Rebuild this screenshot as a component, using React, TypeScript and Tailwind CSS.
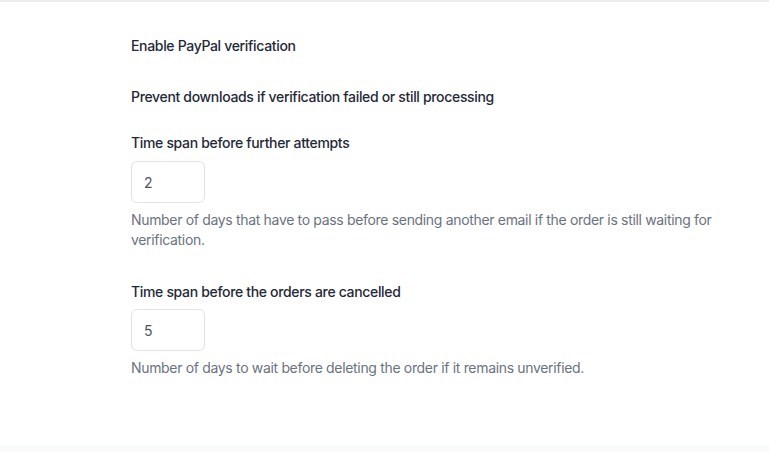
export default function App() {
  return (
    <div className="min-h-[452px] bg-[#f9fafb] tracking-[-0.33px]" style={{ fontFamily: "Inter, 'Noto Sans', sans-serif" }}>
      <div className="h-[445px] bg-white border-t-2 border-[#ececec] pl-[131px] pt-[34px]">
        <div className="text-[14px] leading-[20px] font-medium text-[#1f2937]">Enable PayPal verification</div>
        <div className="mt-[31px] text-[14px] leading-[20px] font-medium text-[#1f2937]">
          Prevent downloads if verification failed or still processing
        </div>
        <div className="mt-[26px] text-[14px] leading-[20px] font-medium text-[#1f2937]">Time span before further attempts</div>
        <div className="mt-[8px] w-[74px] h-[42px] rounded-[6px] border border-[#dfe2e6] flex items-center pl-[12px] text-[14px] text-[#4b5563]">
          2
        </div>
        <p className="mt-[7px] w-[600px] text-[14px] leading-[20px] text-[#6b7280]">
          Number of days that have to pass before sending another email if the order is still waiting for verification.
        </p>
        <div className="mt-[32px] text-[14px] leading-[20px] font-medium text-[#1f2937]">
          Time span before the orders are cancelled
        </div>
        <div className="mt-[7px] w-[74px] h-[42px] rounded-[6px] border border-[#dfe2e6] flex items-center pl-[12px] text-[14px] text-[#4b5563]">
          5
        </div>
        <p className="mt-[7px] text-[14px] leading-[20px] text-[#6b7280]">
          Number of days to wait before deleting the order if it remains unverified.
        </p>
      </div>
    </div>
  );
}
